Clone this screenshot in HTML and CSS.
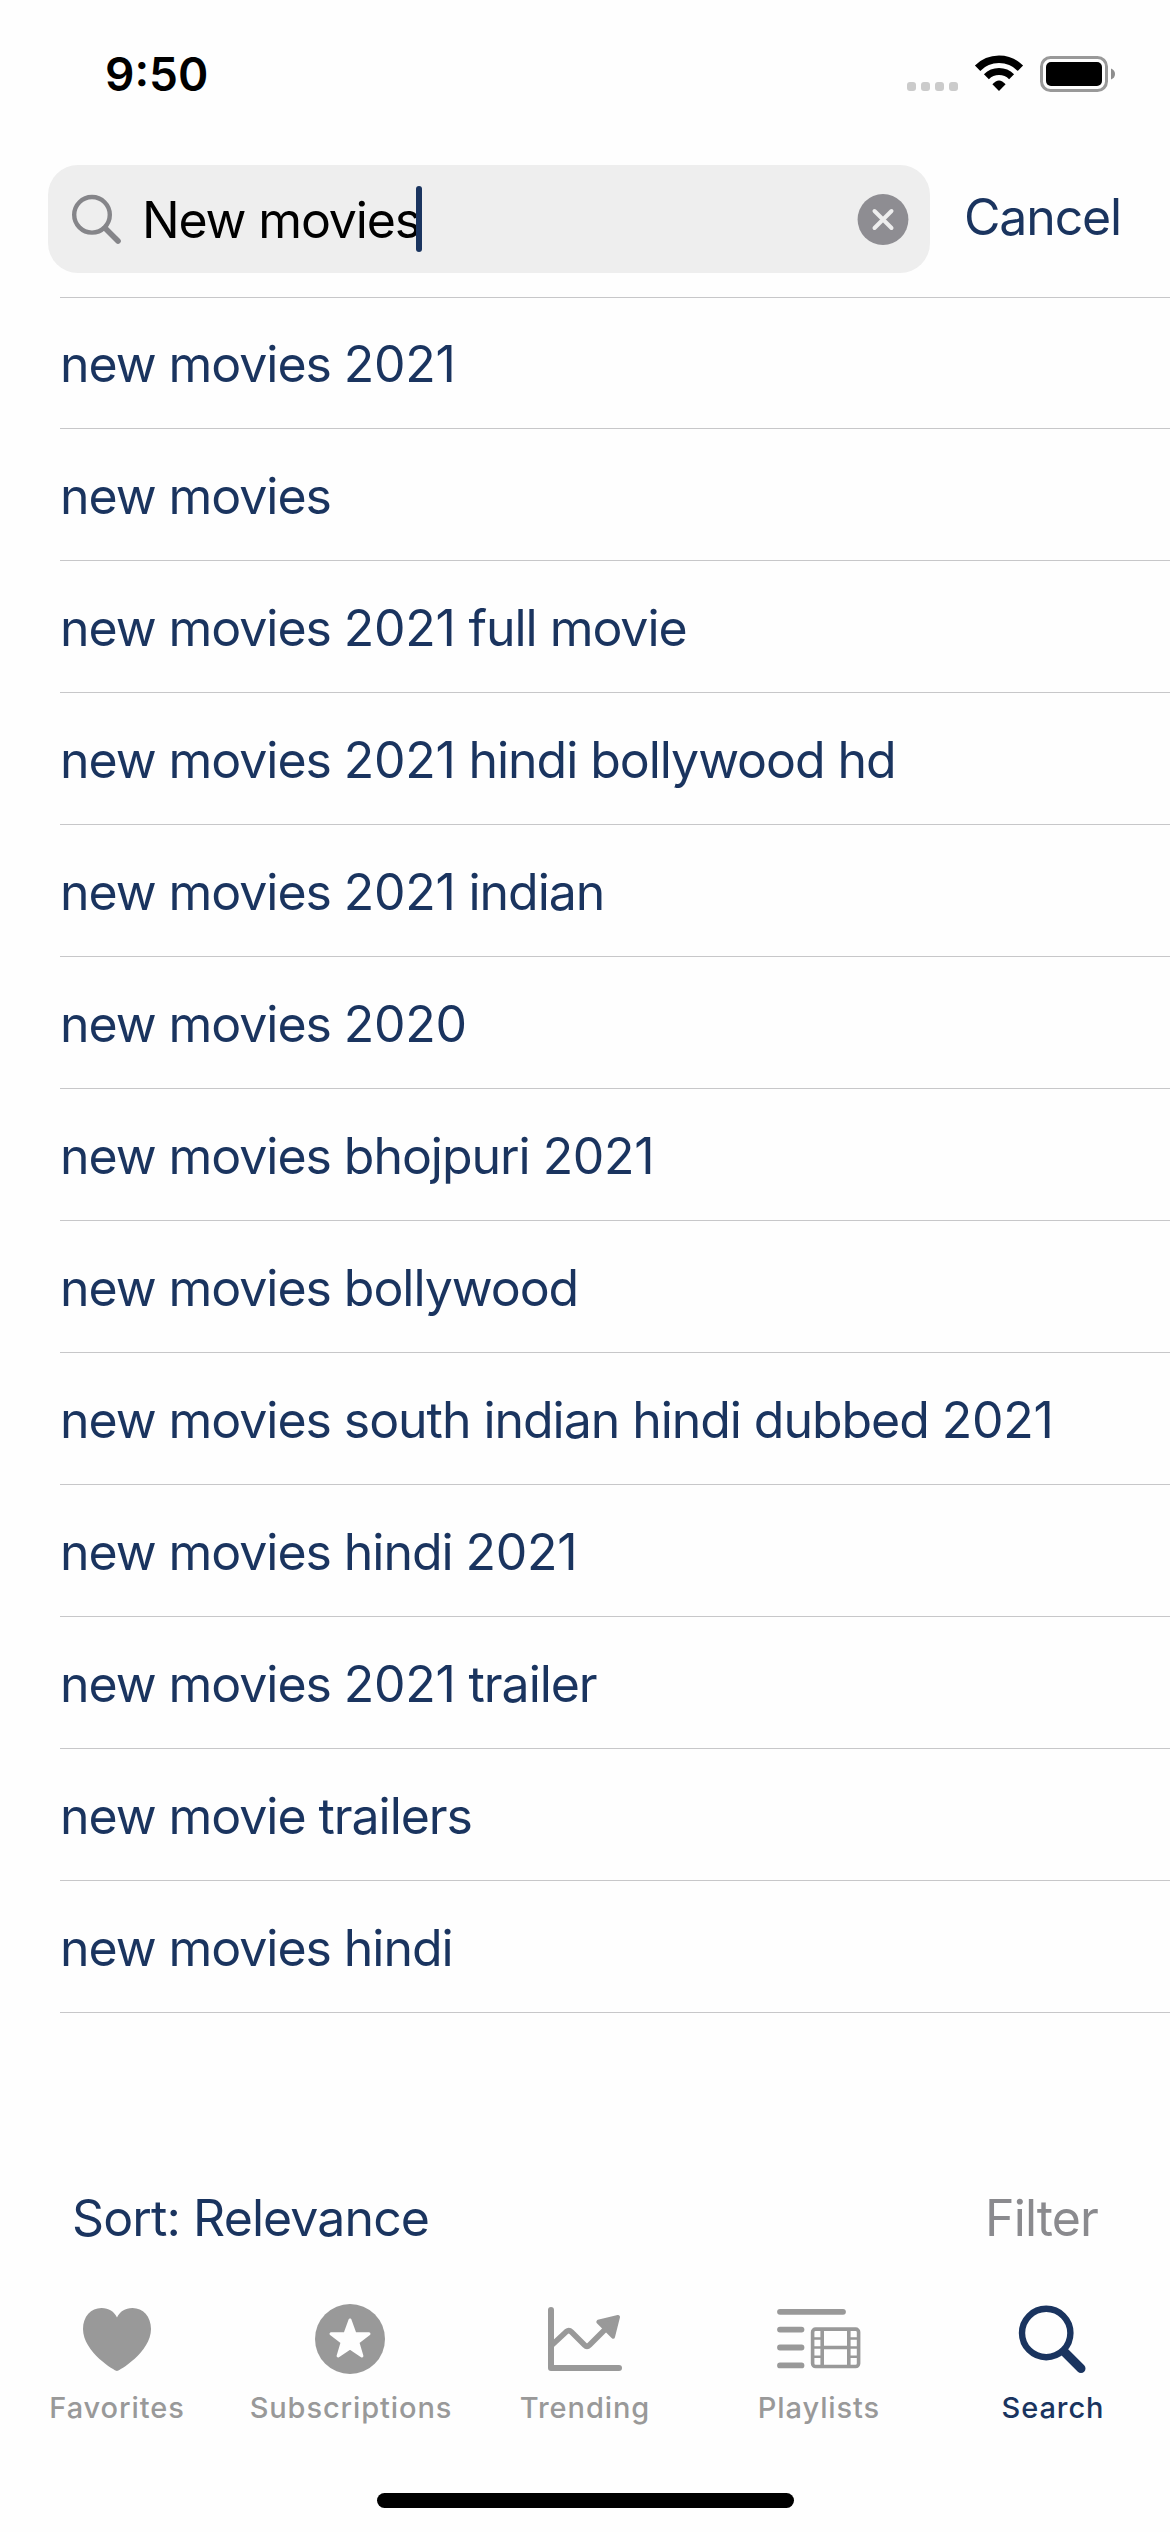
FILE: index.html
```html
<!DOCTYPE html>
<html lang="en">
<head>
<meta charset="utf-8">
<title>Search</title>
<link rel="stylesheet" href="styles.css">
</head>
<body>
<div class="screen">
  <header class="status">
    <span class="time">9:50</span>
    <svg class="status-icons" width="208" height="40" viewBox="0 0 208 40">
      <g fill="#cbcbcb">
        <rect x="0" y="28" width="9" height="9" rx="3"/><rect x="14" y="28" width="9" height="9" rx="3"/><rect x="28" y="28" width="9" height="9" rx="3"/><rect x="42" y="28" width="9" height="9" rx="3"/>
      </g>
      <g fill="none" stroke="#000">
        <path d="M70.6 14.2A30.2 30.2 0 0 1 113.4 14.2" stroke-width="7.6"/>
        <path d="M79.4 22.8A17.8 17.8 0 0 1 104.6 22.8" stroke-width="7"/>
      </g>
      <path d="M85.4 30.2Q92 22.6 98.6 30.2L92 37Z"/>
      <rect x="134.5" y="3.5" width="65" height="33" rx="9" fill="none" stroke="#999" stroke-width="3"/>
      <rect x="139" y="8" width="56" height="24" rx="5"/>
      <path d="M204 14.5Q208 16 208 20T204 25.5Z" fill="#8e8e8e"/>
    </svg>
  </header>

  <div class="search">
    <div class="field">
      <svg class="glass" width="50" height="50" viewBox="0 0 50 50" fill="none" stroke="#858589" stroke-linecap="round">
        <circle cx="20" cy="20.8" r="17.8" stroke-width="4.4"/><path d="M33.2 34.2L46 47" stroke-width="5.6"/>
      </svg>
      <span class="query">New movies</span><span class="caret"></span>
      <svg class="clear" width="52" height="52" viewBox="0 0 52 52">
        <circle cx="26" cy="26.5" r="25.4" fill="#8e8d92"/><path d="M17.5 18L34.5 35M34.5 18L17.5 35" stroke="#eee" stroke-width="4" stroke-linecap="round"/>
      </svg>
    </div>
    <span class="cancel">Cancel</span>
  </div>

  <ul class="suggestions">
    <li>new movies <span class="year">2021</span></li>
    <li>new movies</li>
    <li>new movies <span class="year">2021</span> full movie</li>
    <li>new movies <span class="year">2021</span> hindi bollywood hd</li>
    <li>new movies <span class="year">2021</span> indian</li>
    <li>new movies <span class="year">2020</span></li>
    <li>new movies bhojpuri <span class="year">2021</span></li>
    <li>new movies bollywood</li>
    <li>new movies south indian hindi dubbed <span class="year">2021</span></li>
    <li>new movies hindi <span class="year">2021</span></li>
    <li>new movies <span class="year">2021</span> trailer</li>
    <li>new movie trailers</li>
    <li>new movies hindi</li>
  </ul>

  <div class="toolbar">
    <span class="sort">Sort: Relevance</span>
    <span class="filter">Filter</span>
  </div>

  <nav class="tabs">
    <a class="tab">
      <svg width="90" height="80" viewBox="0 0 90 80" fill="currentColor"><path d="M45 71C43 71 11 52 11 29C11 16.500 19 8 29.500 8C37 8 42 11.500 45 17.500C48 11.500 53 8 60.500 8C71 8 79 16.500 79 29C79 52 47 71 45 71Z"/></svg>
      <span>Favorites</span>
    </a>
    <a class="tab">
      <svg width="90" height="80" viewBox="0 0 90 80"><circle cx="44" cy="39" r="35" fill="currentColor"/><path d="M44 20L48.900 33.600L63 33.800L51.900 42.400L55.900 56L44 47.900L32.100 56L36.100 42.400L25 33.800L39.100 33.600Z" fill="#fefefe" stroke="#fefefe" stroke-width="3" stroke-linejoin="round"/></svg>
      <span>Subscriptions</span>
    </a>
    <a class="tab">
      <svg width="90" height="80" viewBox="0 0 90 80" fill="none" stroke="currentColor" stroke-width="6" stroke-linecap="round" stroke-linejoin="round"><path d="M11 10V68H79"/><path d="M12 45L26.500 31.500Q29 29.500 31.500 32L44.500 45Q47 47.500 49.500 45L66 28.500" stroke-width="5.600"/><path d="M58.300 21.800L78 17L73 36.700Z" fill="currentColor" stroke-width="4"/></svg>
      <span>Trending</span>
    </a>
    <a class="tab">
      <svg width="90" height="80" viewBox="0 0 90 80" fill="none" stroke="currentColor" stroke-width="5.800" stroke-linecap="round"><path d="M6 11.800H69M6 29.600H27.500M6 47.500H27.500M6 65.400H27.500"/><rect x="38.600" y="29.100" width="46" height="37.400" rx="3" stroke-width="3.600"/><path d="M48.200 29V66M74.800 29V66M48.200 47.500H75" stroke-width="3.600" stroke-linecap="butt"/><path d="M39 38.500H48M39 47.500H48M39 56.800H48M75 38.500H84M75 47.500H84M75 56.800H84" stroke-width="2.600" stroke-linecap="butt"/></svg>
      <span>Playlists</span>
    </a>
    <a class="tab active">
      <svg width="90" height="80" viewBox="0 0 90 80" fill="none" stroke="currentColor" stroke-linecap="round"><circle cx="38.200" cy="33" r="24.200" stroke-width="6.400"/><path d="M57 52.500L73 68.500" stroke-width="9"/></svg>
      <span>Search</span>
    </a>
  </nav>
  <div class="home"></div>
</div>
</body>
</html>
```
FILE: styles.css
```css
* { box-sizing: border-box; }
body { margin: 0; background: #fefefe; font-family: Inter, "Liberation Sans", sans-serif; }
.screen { width: 1170px; height: 2532px; display: flex; flex-direction: column; color: #1a345f; }
.status { height: 165px; padding: 43px 55px 0 105px; display: flex; justify-content: space-between; align-items: flex-start; color: #000; }
.time { font-size: 46px; font-weight: 600; line-height: 62px; }
.status-icons { margin-top: 11px; }
.search { height: 132px; padding-left: 48px; display: flex; align-items: flex-start; }
.field { width: 882px; height: 108px; border-radius: 30px; background: #eee; display: flex; align-items: center; padding: 0 21px 0 24px; }
.query { margin-left: 20px; padding-top: 2px; color: #000; font-size: 50px; line-height: 60px; letter-spacing: -1.15px; white-space: nowrap; }
.caret { width: 6px; height: 66px; border-radius: 3px; background: #1a345f; margin-left: -4px; }
.clear { margin-left: auto; }
.cancel { margin-left: 34px; font-size: 50px; line-height: 60px; letter-spacing: -1.15px; padding-top: 22px; }
.suggestions { list-style: none; margin: 0 0 0 60px; padding: 0; font-size: 50px; letter-spacing: -1.05px; }
.suggestions li { height: 132px; line-height: 134px; border-bottom: 1px solid #c7c7c9; white-space: nowrap; }
.suggestions li:first-child { border-top: 1px solid #c7c7c9; line-height: 132px; }
.year { letter-spacing: -0.3px; }
.toolbar { height: 118px; margin-top: 159px; padding: 0 72px; display: flex; justify-content: space-between; font-size: 50px; line-height: 92px; letter-spacing: -0.9px; }
.filter { color: #8a8a8e; }
.tabs { display: grid; grid-template-columns: repeat(5, 1fr); height: 193px; margin-top: 10px; }
.tab { display: flex; flex-direction: column; align-items: center; color: #999; font-size: 29px; font-weight: 500; line-height: 36px; letter-spacing: 0.9px; }
.tab span { margin-top: 10px; }
.active { color: #1a345f; }
.home { width: 417px; height: 15px; border-radius: 8px; background: #000; align-self: center; }
```
